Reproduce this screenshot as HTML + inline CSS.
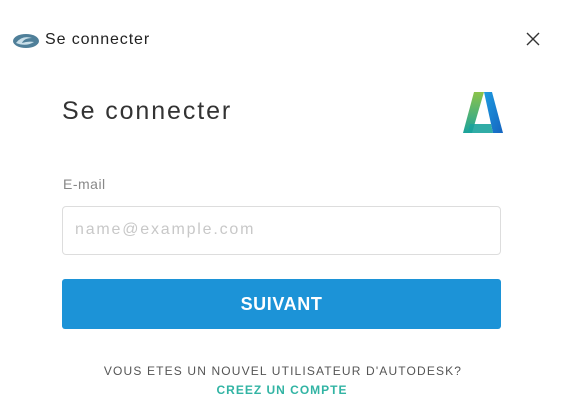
<!DOCTYPE html>
<html><head><meta charset="utf-8"><style>
body{margin:0;width:576px;height:418px;background:#fff;font-family:"Liberation Sans",sans-serif;position:relative;overflow:hidden}
.a{position:absolute}
</style></head><body>
<svg class="a" style="left:12px;top:33px" width="28" height="16" viewBox="0 0 28 16">
<ellipse cx="14" cy="8" rx="13" ry="7" fill="#4f7f99"/>
<path d="M4 10 Q10 2 20 5 Q12 5 10 10 Q16 8 22 9 Q14 14 4 10Z" fill="#c9dfe9"/>
</svg>
<div class="a" style="left:45px;top:31px;font-size:16px;color:#222;letter-spacing:0.9px">Se connecter</div>
<svg class="a" style="left:526px;top:32px" width="14" height="14"><path d="M1 1L13 13M13 1L1 13" stroke="#333" stroke-width="1.4"/></svg>
<div class="a" style="left:62px;top:97px;font-size:25px;color:#333;letter-spacing:1.9px">Se connecter</div>
<svg class="a" style="left:460px;top:89px" width="44" height="46" viewBox="0 0 44 46">
<defs><linearGradient id="g1" x1="0" y1="0" x2="0" y2="1"><stop offset="0" stop-color="#8bc34a"/><stop offset="1" stop-color="#1ba39c"/></linearGradient>
<linearGradient id="g2" x1="0" y1="0" x2="1" y2="1"><stop offset="0" stop-color="#1e9be0"/><stop offset="1" stop-color="#1565c0"/></linearGradient></defs>
<path d="M14 3 L24 3 L12 44 L3 44Z" fill="url(#g1)"/>
<path d="M24 3 L32 3 L43 44 L33 44Z" fill="url(#g2)"/>
<path d="M10 35 L31 35 L33 44 L8 44Z" fill="#1ba39c" opacity=".9"/>
</svg>
<div class="a" style="left:63px;top:176px;font-size:14px;color:#888;letter-spacing:0.5px">E-mail</div>
<div class="a" style="left:62px;top:206px;width:437px;height:47px;border:1px solid #ddd;border-radius:4px"></div>
<div class="a" style="left:75px;top:221px;font-size:16px;color:#c8c8c8;letter-spacing:1.8px">name@example.com</div>
<div class="a" style="left:62px;top:279px;width:439px;height:50px;background:#1c93d7;border-radius:3px;color:#fff;font-weight:bold;font-size:18px;text-align:center;line-height:50px;letter-spacing:0.6px">SUIVANT</div>
<div class="a" style="left:0;width:566px;top:364px;text-align:center;font-size:12px;color:#555;letter-spacing:1.15px">VOUS ETES UN NOUVEL UTILISATEUR D'AUTODESK?</div>
<div class="a" style="left:0;width:564px;top:383px;text-align:center;font-size:12px;color:#32b4a4;font-weight:bold;letter-spacing:1px">CREEZ UN COMPTE</div>
</body></html>
